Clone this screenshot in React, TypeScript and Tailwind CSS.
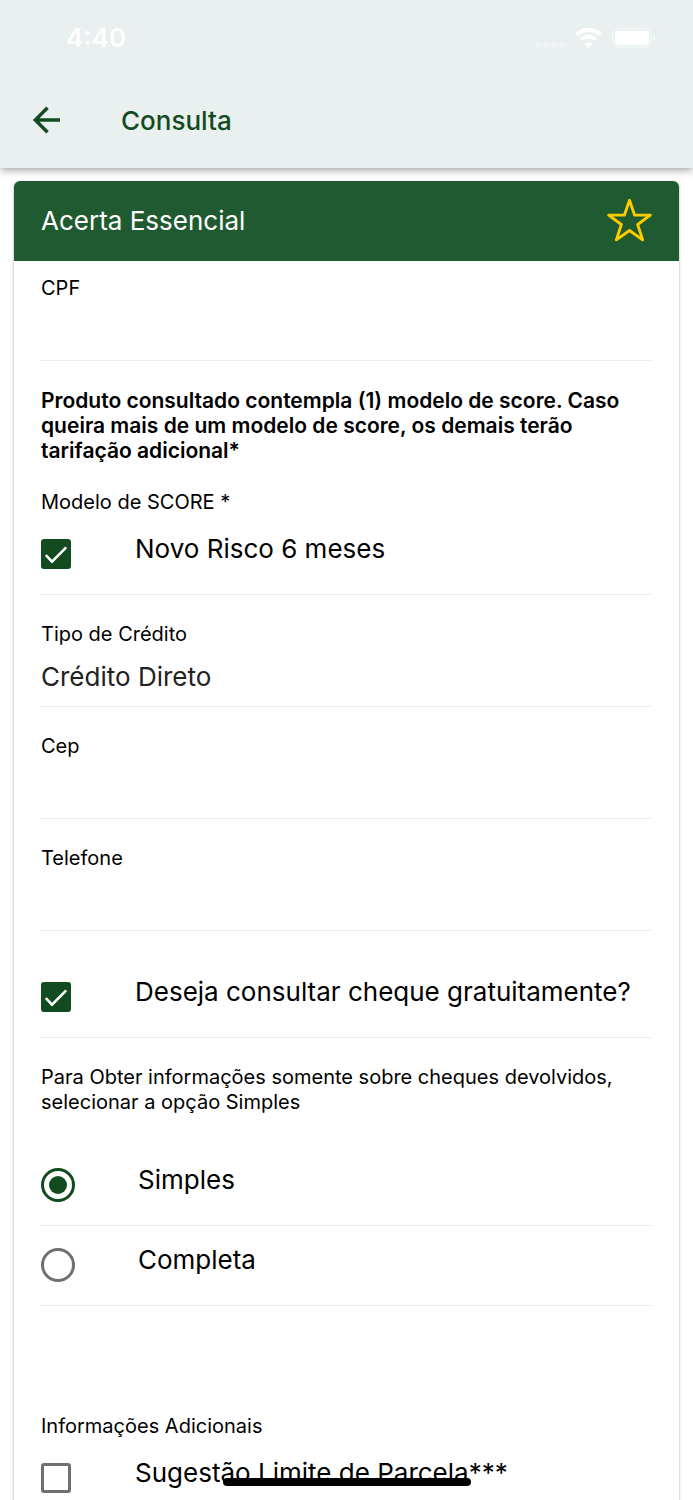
import { useState } from "react";
import type { ReactNode } from "react";

function StatusBar() {
  return (
    <div className="flex h-[76px] items-center justify-between pl-[66px] pr-[37px] text-white">
      <span className="text-[26px] leading-8 font-semibold">4:40</span>
      <div className="flex items-center gap-[10px]">
        <svg width="30" height="22" viewBox="0 0 30 22" fill="currentColor" opacity="0.3" aria-hidden>
          <circle cx="3" cy="18" r="3" />
          <circle cx="11" cy="18" r="3" />
          <circle cx="19" cy="18" r="3" />
          <circle cx="27" cy="18" r="3" />
        </svg>
        <svg width="27" height="20" viewBox="0 0 27 20" fill="none" stroke="currentColor" aria-hidden>
          <path d="M1.5 6.8a17.2 17.2 0 0 1 24 0" strokeWidth="4" />
          <path d="M6 11.6a10.8 10.8 0 0 1 15 0" strokeWidth="3.8" />
          <path d="M9.4 15.8a6 6 0 0 1 8.2 0L13.5 20z" fill="currentColor" stroke="none" />
        </svg>
        <svg width="44" height="22" viewBox="0 0 44 22" aria-hidden>
          <rect x="0.75" y="1.75" width="38.5" height="18.5" rx="6" fill="none" stroke="currentColor" strokeWidth="1.5" opacity="0.35" />
          <rect x="3" y="4" width="34" height="14" rx="3" fill="currentColor" />
          <path d="M41 7.5c3.2 1.4 3.2 5.6 0 7z" fill="currentColor" opacity="0.4" />
        </svg>
      </div>
    </div>
  );
}

function StarIcon() {
  return (
    <svg width="45" height="44" viewBox="320 86 135 132" fill="none" stroke="#ffcc00" strokeWidth="8.5" strokeLinejoin="round" aria-hidden>
      <path d="M387.5 90L403 134.5H450L412 162.5L427 208.5L387.5 180.5L348 208.5L363 162.5L325 134.5H372Z" />
    </svg>
  );
}

function Field({ id, label, children }: { id: string; label: string; children: ReactNode }) {
  return (
    <div className="border-b border-[#ececec]">
      <label htmlFor={id} className="block text-[20px] leading-[25px]">
        {label}
      </label>
      {children}
    </div>
  );
}

function TextField({ id, label }: { id: string; label: string }) {
  const [value, setValue] = useState("");
  return (
    <Field id={id} label={label}>
      <input
        id={id}
        type="text"
        value={value}
        onChange={(e) => setValue(e.target.value)}
        className="block h-[59px] w-full bg-transparent text-[26px] text-[#222] outline-none"
      />
    </Field>
  );
}

function CheckboxRow({ label, defaultChecked = false }: { label: string; defaultChecked?: boolean }) {
  const [checked, setChecked] = useState(defaultChecked);
  return (
    <label className="flex h-20 cursor-pointer items-start gap-16 border-b border-[#ececec]">
      <span className="mt-6 grid size-[30px] shrink-0">
        <input
          type="checkbox"
          checked={checked}
          onChange={(e) => setChecked(e.target.checked)}
          className="col-start-1 row-start-1 size-[30px] appearance-none rounded-[3px] border-3 border-[#707070] checked:border-[#114b1f] checked:bg-[#114b1f]"
        />
        {checked && (
          <svg viewBox="0 0 30 30" fill="none" stroke="#fff" strokeWidth="2.6" className="pointer-events-none col-start-1 row-start-1 size-[30px]" aria-hidden>
            <path d="M4.8 16.2L11 22.6L25.2 8.3" />
          </svg>
        )}
      </span>
      <span className="mt-[18px] text-[26px] leading-8">{label}</span>
    </label>
  );
}

function RadioRow({ label, checked, onSelect }: { label: string; checked: boolean; onSelect: () => void }) {
  return (
    <label className="flex h-20 cursor-pointer items-start gap-[63px] border-b border-[#ececec]">
      <span className="mt-[22px] grid size-[34px] shrink-0 place-items-center">
        <input
          type="radio"
          name="cheque"
          checked={checked}
          onChange={onSelect}
          className="col-start-1 row-start-1 size-[34px] appearance-none rounded-full border-[3px] border-[#707070] checked:border-[#114b1f]"
        />
        {checked && <span className="pointer-events-none col-start-1 row-start-1 size-[18px] rounded-full bg-[#114b1f]" />}
      </span>
      <span className="mt-[18px] text-[26px] leading-8">{label}</span>
    </label>
  );
}

export default function App() {
  const [tipo, setTipo] = useState("direto");
  const [cheque, setCheque] = useState("simples");

  return (
    <div className="flex h-screen flex-col overflow-hidden bg-white font-['Inter',sans-serif] text-black">
      <header className="z-10 shrink-0 bg-[#eaf0f0] shadow-[0_2px_8px_rgba(0,0,0,0.38)]">
        <StatusBar />
        <div className="flex h-[92px] items-start gap-[60px] pl-[32px] pt-7 text-[#114b1f]">
          <button type="button" aria-label="Voltar" className="flex h-8 items-center">
            <svg width="29" height="28" viewBox="0 0 29 28" fill="none" stroke="currentColor" strokeWidth="3.4" aria-hidden>
              <path d="M28 14H4M15.5 1.8L3.3 14L15.5 26.2" />
            </svg>
          </button>
          <h1 className="text-[26px] leading-[34px] font-medium">Consulta</h1>
        </div>
      </header>

      <main className="min-h-0 flex-1 overflow-y-auto px-[14px] pt-[13px] [scrollbar-width:none]">
        <section className="rounded-[6px] shadow-[0_1px_3px_rgba(0,0,0,0.35)]">
          <div className="flex h-20 items-center justify-between rounded-t-[6px] bg-[#1f5a30] pl-[27px] pr-[27px] text-white">
            <h2 className="text-[26px] leading-8">Acerta Essencial</h2>
            <button type="button" aria-label="Favoritar">
              <StarIcon />
            </button>
          </div>

          <form className="flex flex-col gap-[27px] px-[27px] pt-[15px] pb-7">
            <TextField id="cpf" label="CPF" />

            <p className="text-[21px] leading-[25px] font-semibold">
              Produto consultado contempla (1) modelo de score. Caso queira mais de um modelo de score, os demais terão
              tarifação adicional*
            </p>

            <fieldset>
              <legend className="text-[20px] leading-[25px]">Modelo de SCORE *</legend>
              <CheckboxRow label="Novo Risco 6 meses" defaultChecked />
            </fieldset>

            <Field id="tipo" label="Tipo de Crédito">
              <select
                id="tipo"
                value={tipo}
                onChange={(e) => setTipo(e.target.value)}
                className="block h-[59px] w-full appearance-none bg-transparent text-[26px] text-[#222] outline-none"
              >
                <option value="direto">Crédito Direto</option>
              </select>
            </Field>

            <TextField id="cep" label="Cep" />
            <TextField id="telefone" label="Telefone" />

            <CheckboxRow label="Deseja consultar cheque gratuitamente?" defaultChecked />

            <fieldset>
              <legend className="mb-[31px] text-[20px] leading-[25px]">
                Para Obter informações somente sobre cheques devolvidos, selecionar a opção Simples
              </legend>
              <RadioRow label="Simples" checked={cheque === "simples"} onSelect={() => setCheque("simples")} />
              <RadioRow label="Completa" checked={cheque === "completa"} onSelect={() => setCheque("completa")} />
            </fieldset>

            <fieldset className="mt-[81px]">
              <legend className="text-[20px] leading-[25px]">Informações Adicionais</legend>
              <CheckboxRow label="Sugestão Limite de Parcela***" />
            </fieldset>
          </form>
        </section>
      </main>

      <div className="fixed bottom-[14px] left-1/2 z-20 h-2 w-[248px] -translate-x-1/2 rounded-full bg-black" />
    </div>
  );
}
